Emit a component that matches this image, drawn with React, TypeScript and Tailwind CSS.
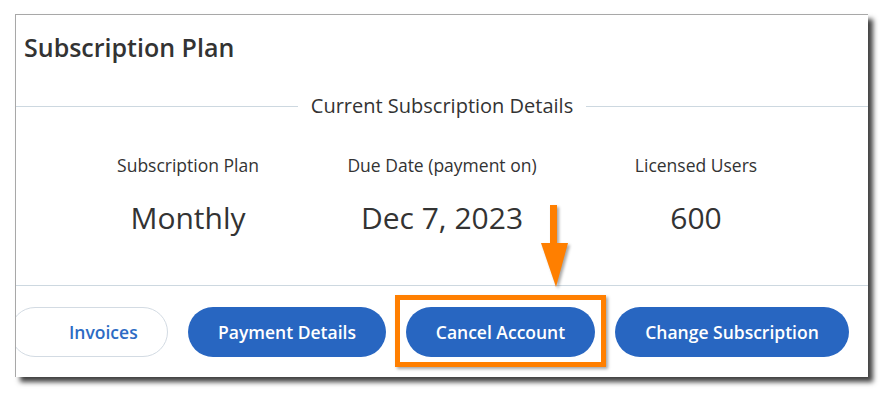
import { FC } from 'react'

const details = [
  { label: 'Subscription Plan', value: 'Monthly' },
  { label: 'Due Date (payment on)', value: 'Dec 7, 2023' },
  { label: 'Licensed Users', value: '600' },
]

const PillButton: FC<{ label: string; width: string }> = ({ label, width }) => (
  <button
    className={`${width} h-[50px] shrink-0 rounded-full bg-[#2866c1] text-[17.5px] font-semibold text-white`}
  >
    {label}
  </button>
)

export default function App() {
  return (
    <div className="relative h-[406px] w-[895px] bg-white font-['Open_Sans',sans-serif] text-[#333]">
      <div className="ml-[15px] pt-[14px]">
        <div className="w-[853px] overflow-hidden border-l border-t border-[#a8a8a8] bg-white shadow-[5px_5px_5px_rgba(0,0,0,0.75)]">
          <h1 className="pl-[8px] pt-[16px] text-[25px] font-semibold leading-[32px]">Subscription Plan</h1>

          <div className="mt-[29px] flex h-[28px] items-center">
            <div className="h-px flex-1 bg-[#cdd8e0]" />
            <span className="px-[13px] text-[20px] leading-[28px]">Current Subscription Details</span>
            <div className="h-px flex-1 bg-[#cdd8e0]" />
          </div>

          <div className="mt-[33px] grid grid-cols-[254px_254px_254px] justify-center text-center">
            {details.map((d) => (
              <div key={d.label} className="flex flex-col items-center">
                <span className="text-[17.5px] leading-[24px]">{d.label}</span>
                <span className="mt-[21px] text-[30px] leading-[40px]">{d.value}</span>
              </div>
            ))}
          </div>

          <div className="mt-[47px] h-px bg-[#cdd8e0]" />

          <div className="flex gap-[20px] pb-[20px] pt-[21px]">
            <button className="-ml-[6px] h-[50px] w-[158px] shrink-0 rounded-full border border-[#d3dbe3] pl-[58px] pr-[28px] text-left text-[17.5px] font-semibold text-[#2d6bc4]">
              Invoices
            </button>
            <PillButton label="Payment Details" width="w-[198px]" />
            <PillButton label="Cancel Account" width="w-[189px]" />
            <PillButton label="Change Subscription" width="w-[234px]" />
          </div>
        </div>
      </div>

      {/* callout highlight */}
      <div className="absolute left-[395px] top-[295px] h-[72px] w-[211px] border-[5px] border-[#ff7f00] shadow-[2px_2px_3px_rgba(0,0,0,0.35)]" />

      <svg
        className="absolute left-[536px] top-[200px]"
        width="40"
        height="95"
        viewBox="0 0 40 95"
        style={{ filter: 'drop-shadow(2px 2px 1.5px rgba(0,0,0,0.35))' }}
      >
        <rect x="14" y="5" width="7" height="40" fill="#ff7f00" />
        <polygon points="5,43 32,43 20,87" fill="#ff7f00" />
      </svg>
    </div>
  )
}
